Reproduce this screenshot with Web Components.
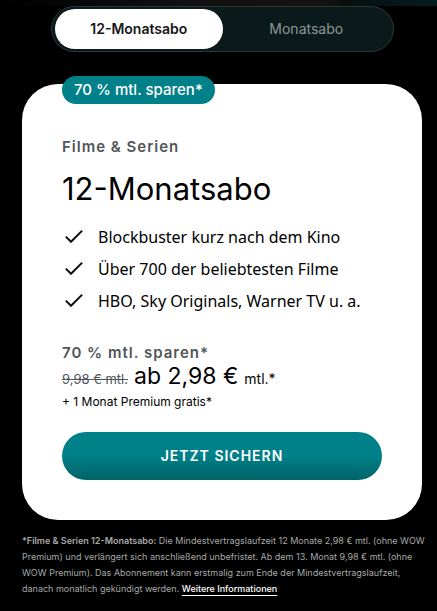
<!DOCTYPE html>
<html lang="de">
<head>
<meta charset="utf-8">
<meta name="viewport" content="width=device-width, initial-scale=1">
<title>12-Monatsabo</title>
<style>
  body { margin: 0; background: #000; color: #000; font-family: Inter, "Noto Sans", sans-serif; }
</style>
</head>
<body>
<offer-page>
  <plan-switch slot="switch"></plan-switch>
  <offer-card>
    <span slot="badge">70 % mtl. sparen*</span>
    <span slot="category">Filme &amp; Serien</span>
    <span slot="title">12-Monatsabo</span>
    <check-item slot="features" role="listitem">Blockbuster kurz nach dem Kino</check-item>
    <check-item slot="features" role="listitem">Über 700 der beliebtesten Filme</check-item>
    <check-item slot="features" role="listitem">HBO, Sky Originals, Warner TV u. a.</check-item>
    <price-block slot="price">
      <span slot="saving">70 % mtl. sparen*</span>
      <span slot="old">9,98 € mtl.</span>
      <span slot="now">ab 2,98 €</span>
      <span slot="unit">mtl.*</span>
      <span slot="extra">+ 1 Monat Premium gratis*</span>
    </price-block>
    <cta-button slot="action">JETZT SICHERN</cta-button>
  </offer-card>
  <legal-note slot="note"></legal-note>
</offer-page>
<script>
const define = (name, html) => {
  const template = document.createElement('template');
  template.innerHTML = html;
  customElements.define(name, class extends HTMLElement {
    constructor() {
      super();
      this.attachShadow({ mode: 'open' }).append(template.content.cloneNode(true));
    }
  });
};

define('offer-page', `
  <style>
    :host { display: block; }
    .backdrop { height: 6px; background: linear-gradient(90deg, #000 0%, #080808 20%, #111010 40%, #151312 74%, #06100f 80%, #041c1e 100%); }
    main { display: flex; flex-direction: column; padding: 0 15px 12px 22px; }
    ::slotted(plan-switch) { margin: 0 28px 32px 29px; }
  </style>
  <div class="backdrop"></div>
  <main><slot name="switch"></slot><slot></slot><slot name="note"></slot></main>
`);

define('plan-switch', `
  <style>
    :host { display: grid; grid-template-columns: 1fr 1fr; padding: 2px 3px; border: 1px solid #2c3635; border-radius: 24px; background: #0a1a1a; }
    button { height: 40px; margin: 0; padding: 0; border: 0; border-radius: 20px; background: none; color: #8f9896; font: 400 14px/20px Inter, "Noto Sans", sans-serif; }
    button[aria-pressed="true"] { background: #fff; color: #161616; font-weight: 600; }
  </style>
  <button type="button" aria-pressed="true">12-Monatsabo</button>
  <button type="button" aria-pressed="false">Monatsabo</button>
`);

define('offer-card', `
  <style>
    :host { display: block; position: relative; padding: 53px 40px 40px; border-radius: 36px; background: #fff; }
    .badge { position: absolute; top: -8px; left: 40px; padding: 0 12px; border-radius: 14px; background: #008088; color: #fff; font-size: 15px; font-weight: 500; line-height: 28px; }
    .category { margin: 0 0 14px; color: #50565a; font-size: 15px; font-weight: 600; line-height: 20px; letter-spacing: 1px; }
    h1 { margin: 0 0 18px; font-size: 31px; font-weight: 400; line-height: 36px; }
    .features { display: grid; gap: 8px; margin-bottom: 30px; }
  </style>
  <div class="badge"><slot name="badge"></slot></div>
  <p class="category"><slot name="category"></slot></p>
  <h1><slot name="title"></slot></h1>
  <div class="features" role="list"><slot name="features"></slot></div>
  <slot name="price"></slot>
  <slot name="action"></slot>
`);

define('check-item', `
  <style>
    :host { display: flex; align-items: center; gap: 12px; font-family: "Noto Sans", sans-serif; font-size: 16px; line-height: 24px; }
    svg { flex: none; }
  </style>
  <svg width="24" height="24" viewBox="0 0 24 24" fill="none" stroke="#111" stroke-width="2" aria-hidden="true"><path d="M3.8 11.6 9 16.8 20.2 5.6"/></svg>
  <span><slot></slot></span>
`);

define('price-block', `
  <style>
    :host { display: block; margin-bottom: 20px; }
    p { margin: 0; }
    .saving { color: #50565a; font-size: 15px; font-weight: 600; line-height: 20px; letter-spacing: 1px; }
    .price { display: flex; align-items: baseline; gap: 6px; line-height: 26px; }
    s { color: #50565a; font-size: 13px; }
    strong { font-size: 23px; font-weight: 400; }
    .unit { font-size: 14px; }
    .extra { font-size: 12px; line-height: 20px; }
  </style>
  <p class="saving"><slot name="saving"></slot></p>
  <p class="price"><s><slot name="old"></slot></s><strong><slot name="now"></slot></strong><span class="unit"><slot name="unit"></slot></span></p>
  <p class="extra"><slot name="extra"></slot></p>
`);

define('cta-button', `
  <style>
    :host { display: block; }
    button { display: block; width: 100%; height: 48px; padding: 0; border: 0; border-radius: 24px; background: linear-gradient(#008088 0%, #008088 50%, #006368 100%); color: #fff; font: 600 14px/20px Inter, "Noto Sans", sans-serif; letter-spacing: 1px; }
  </style>
  <button type="button"><slot></slot></button>
`);

define('legal-note', `
  <style>
    :host { display: block; margin: 13px -5px 0 0; color: #a8a8a8; font-size: 9px; line-height: 16px; }
    p { margin: 0; }
    b { font-weight: 600; }
    a { color: #fff; font-weight: 500; text-decoration: underline; text-underline-offset: 3px; }
  </style>
  <p><b>*Filme &amp; Serien 12-Monatsabo:</b> Die Mindestvertragslaufzeit 12 Monate 2,98 € mtl. (ohne WOW Premium) und verlängert sich anschließend unbefristet. Ab dem 13. Monat 9,98 € mtl. (ohne WOW Premium). Das Abonnement kann erstmalig zum Ende der Mindestvertragslaufzeit, danach monatlich gekündigt werden. <a href="#">Weitere Informationen</a></p>
`);
</script>
</body>
</html>
